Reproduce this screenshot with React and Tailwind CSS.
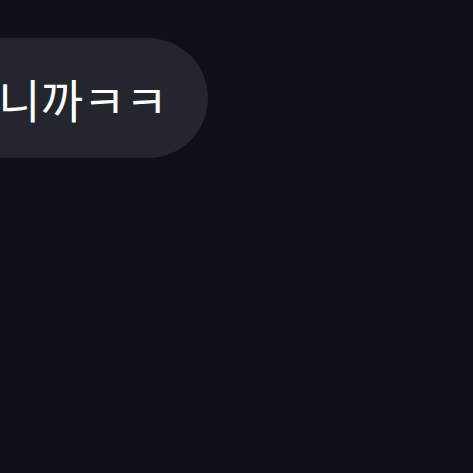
export default function App() {
  return (
    <div className="min-h-screen w-full overflow-hidden bg-[#0d1016] pt-[38px]">
      <div className="ml-[-88px] inline-flex h-[120px] items-center rounded-full bg-[#23262c] pl-[44px] pr-[40px]">
        <span
          className="whitespace-nowrap text-[46px] font-normal leading-none text-white"
          style={{ fontFamily: '"Noto Sans CJK KR", "Noto Sans", sans-serif' }}
        >
          하니까ㅋㅋ
        </span>
      </div>
    </div>
  )
}
